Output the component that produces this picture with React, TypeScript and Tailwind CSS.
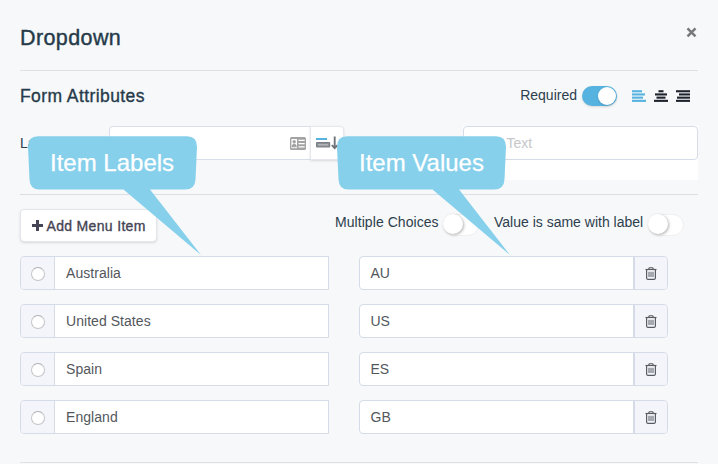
import React from "react";

const rows = [
  { label: "Australia", value: "AU" },
  { label: "United States", value: "US" },
  { label: "Spain", value: "ES" },
  { label: "England", value: "GB" },
];

const lineWidths = {
  left: [10, 13, 11, 14],
  center: [5, 12, 9, 14],
  right: [14, 11, 13, 14],
};

function AlignIcon({ kind, className }: { kind: "left" | "center" | "right"; className: string }) {
  return (
    <svg width="14" height="12" viewBox="0 0 14 12" className={className} fill="currentColor">
      {lineWidths[kind].map((w, i) => (
        <rect
          key={i}
          x={kind === "left" ? 0 : kind === "center" ? (14 - w) / 2 : 14 - w}
          y={i * 3.2 + 0.2}
          width={w}
          height="2.1"
        />
      ))}
    </svg>
  );
}

function Trash() {
  return (
    <svg width="12" height="13" viewBox="0 0 12 13" fill="none" stroke="#595d63">
      <path d="M0.5 2.5h11" strokeWidth="1.2" />
      <path d="M3.6 2.2 4.3 0.7h3.4l0.7 1.5" strokeWidth="1.1" />
      <path d="M1.6 2.8v8.3q0 1.2 1.1 1.2h6.6q1.1 0 1.1-1.2V2.8" strokeWidth="1.2" />
      <path d="M4 4.8v5.2M6 4.8v5.2M8 4.8v5.2" strokeWidth="1" />
    </svg>
  );
}

function CardIcon() {
  return (
    <svg width="16" height="13" viewBox="0 0 16 13" className="block">
      <rect width="16" height="13" rx="1.5" fill="#a3a3a3" />
      <rect x="1.4" y="2" width="5.6" height="9.2" fill="#fff" />
      <circle cx="4.2" cy="4.8" r="1.7" fill="#a3a3a3" />
      <path d="M1.6 10.2q0-3 1.8-3.5h1.6q1.8.5 1.8 3.5z" fill="#a3a3a3" />
      <path d="M8.5 3.4h6.2M8.5 6.6h6.2M8.5 9.8h6.2" stroke="#fff" strokeWidth="1.2" />
    </svg>
  );
}

function PositionIcon() {
  return (
    <svg width="24" height="14" viewBox="0 0 24 14" className="block">
      <path d="M0 3h11" stroke="#56b3df" strokeWidth="2" />
      <rect x="0.6" y="6.6" width="13" height="4.4" rx="0.5" fill="#8f9298" stroke="#7b7f86" strokeWidth="1.2" />
      <path d="M2 8.8h10" stroke="#c6c8cc" strokeWidth="0.9" />
      <path d="M18.7 0.5v11M15.8 9.2l2.9 3 2.9-3" fill="none" stroke="#70747b" strokeWidth="1.9" />
    </svg>
  );
}

function OffSwitch() {
  return (
    <span className="flex h-[22px] w-9 rounded-full border border-[#eff0f2] bg-white">
      <span className="-mt-px -ml-px size-5 rounded-full bg-white shadow-[1px_1px_3px_rgba(0,0,0,0.3)]" />
    </span>
  );
}

function Callout({ text, className }: { text: string; className: string }) {
  return (
    <div className={`absolute top-[136px] h-[120px] w-[174px] ${className}`}>
      <svg width="174" height="120" viewBox="0 0 174 120" className="absolute inset-0">
        <path
          d="M10 .3H159Q169 .3 169 11L167.5 43.5Q167 53.5 157 53.5H122L173 119 95.5 53.5H11.5Q2 53.5 1.5 43.5L0 11Q0 .3 10 .3Z"
          fill="#86d0eb"
        />
      </svg>
      <div className="relative pt-[10px] pl-[22px] text-2xl/[34px] whitespace-nowrap text-white [-webkit-text-stroke:0.25px_white]">
        {text}
      </div>
    </div>
  );
}

export default function App() {
  return (
    <div className="relative h-[464px] w-[718px] overflow-hidden bg-[#f7f8fa] pr-5 pl-5 font-['Liberation_Sans',Arial,sans-serif] text-sm text-[#2d3e4c]">
      <header className="flex h-[71px] items-start justify-between border-b border-[#dfe1e4]">
        <h1 className="pt-[22px] text-[21.5px]/8 tracking-[0.4px] text-[#263b49] [-webkit-text-stroke:0.4px_#263b49]">Dropdown</h1>
        <svg width="11" height="11" viewBox="0 0 11 11" className="mt-[27px] mr-px">
          <path d="M1.5 1.3 9.5 9.3M9.5 1.3 1.5 9.3" stroke="#777a7c" strokeWidth="2.5" />
        </svg>
      </header>

      <section className="h-[124px] border-b border-[#dadfe5]">
        <div className="flex h-[55px] items-start justify-between">
          <h2 className="pt-[12.5px] text-[17.5px]/6 tracking-[0.42px] text-[#263b49] [-webkit-text-stroke:0.35px_#263b49]">Form Attributes</h2>
          <div className="flex items-center pt-[14px] pr-2">
            <span className="pb-px">Required</span>
            <span className="ml-[5px] flex h-5 w-[35px] items-center justify-end rounded-full bg-[#56b3df] pr-px shadow-sm">
              <span className="size-[18px] rounded-full bg-white shadow-sm" />
            </span>
            <AlignIcon kind="left" className="ml-[15px] text-[#56b3df]" />
            <AlignIcon kind="center" className="ml-2 text-[#1e222c]" />
            <AlignIcon kind="right" className="ml-2 text-[#1e222c]" />
          </div>
        </div>
        <div className="flex items-start">
          <span className="w-[89px] leading-[35px]">Label</span>
          <div className="flex h-[34px] w-[202px] items-center justify-end rounded-l-sm border border-[#d8deea] bg-white pr-1">
            <CardIcon />
          </div>
          <div className="-ml-px flex h-[34px] w-[34px] items-center rounded-r-sm border border-[#e6e8ed] bg-white pl-[5px] shadow-sm">
            <PositionIcon />
          </div>
          <div className="ml-[119px] h-[54px] w-[235px] bg-white">
            <div className="h-[34px] rounded-sm border border-[#d5dce8] pl-[10px] leading-[33px] text-[#c5c7ca]">
              Help Text
            </div>
          </div>
        </div>
      </section>

      <section className="h-[268px] border-b border-[#dfe1e4]">
        <div className="flex h-[61px] items-start pt-[14px]">
          <button className="flex h-[33px] w-[137px] items-center rounded-sm border border-[#e3e6eb] bg-white pl-[11px] tracking-[0.33px] whitespace-nowrap text-[#444454] shadow-sm [-webkit-text-stroke:0.35px_#444454]">
            <svg width="11" height="11" viewBox="0 0 11 11" className="mr-[3.5px] shrink-0">
              <path d="M5.5 0v11M0 5.5h11" stroke="#444454" strokeWidth="3" />
            </svg>
            Add Menu Item
          </button>
          <span className="ml-[178px] w-[104px] pt-[3px] tracking-[0.06px] whitespace-nowrap">Multiple Choices</span>
          <span className="ml-1 pt-[5px]"><OffSwitch /></span>
          <span className="ml-[15px] w-[149px] pt-[3px] whitespace-nowrap">Value is same with label</span>
          <span className="ml-[5px] pt-[5px]"><OffSwitch /></span>
        </div>
        <div className="flex flex-col gap-[14px] text-[#53575c]">
          {rows.map((row) => (
            <div key={row.label} className="flex h-[34px] gap-[30px]">
              <div className="flex w-[309px] rounded-l-sm border border-[#d5dce8] bg-white">
                <span className="flex w-[34px] items-center justify-center rounded-l-sm border-r border-[#d5dce8] bg-[#f3f5fa] pt-[2px] pl-px">
                  <span className="size-[14px] rounded-full border border-[#c3c4c6] border-t-[#aeb0b2] bg-white" />
                </span>
                <span className="pl-[11px] leading-[33px] tracking-[0.05px]">{row.label}</span>
              </div>
              <div className="flex w-[309px] justify-between rounded-sm border border-[#d5dce8] bg-white">
                <span className="pl-[10.5px] leading-[33px]">{row.value}</span>
                <span className="flex w-[34px] items-center justify-center rounded-r-sm border-l-2 border-[#d5dce8] bg-[#f3f5fa]">
                  <Trash />
                </span>
              </div>
            </div>
          ))}
        </div>
      </section>

      <Callout text="Item Labels" className="left-7" />
      <Callout text="Item Values" className="left-[337px]" />
    </div>
  );
}
